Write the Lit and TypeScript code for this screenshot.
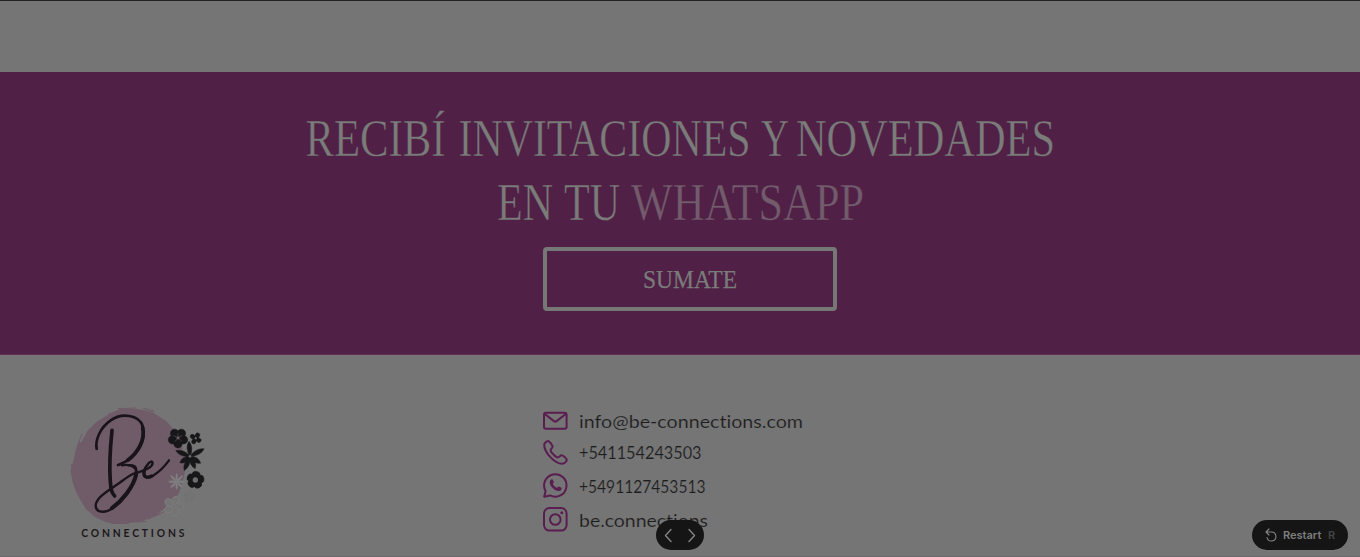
import { LitElement, html, svg, css } from "lit";
import { customElement } from "lit/decorators.js";

type Word = { t: string; x: number; w: number; soft?: boolean };

const line1: Word[] = [
  { t: "RECIBÍ", x: 305.5, w: 140 },
  { t: "INVITACIONES", x: 458.5, w: 292 },
  { t: "Y", x: 761, w: 28 },
  { t: "NOVEDADES", x: 796, w: 259 },
];
const line2: Word[] = [
  { t: "EN", x: 497, w: 56 },
  { t: "TU", x: 564, w: 56 },
  { t: "WHATSAPP", x: 631, w: 233, soft: true },
];

const icons = {
  mail: svg`<rect x="1" y="3.8" width="22.6" height="16" rx="2"/><path d="M1.8 5 11 12.100q1.300 1 2.600 0L22.800 5"/>`,
  phone: svg`<path d="M1.2 4.5C1.5 3 3.6 1.1 5 1c1.400 0 4.600 4.400 4.600 5.700 0 1.300-2 2.200-2 3.500 0 1.900 5.400 7.200 7.300 7.200 1.300 0 2.200-2.100 3.500-2.100 1.400 0 5.400 3 5.400 4.500 0 1.500-2.300 4-4.500 4C12.500 24 1 13 1.200 4.500Z"/>`,
  whatsapp: svg`<path d="M1.200 23.700 2.600 18A11.200 11.200 0 1 1 7.200 22.400Z"/><path class="solid" d="M8.300 6.400c.7-.5 1.300-.3 1.700.5l.8 2c.2.700-.8 1.400-.9 2 .4 1.400 2.600 3.500 4 3.800.7-.1 1.200-1.300 2-1.200l2.100 1c1.500.8.200 3-1.300 3.400-4 1-10.200-4.700-10-8.700 0-1.100.5-2.100 1.600-2.800Z"/>`,
  instagram: svg`<rect x="1" y="1" width="22.600" height="22.600" rx="5.500"/><circle cx="12.300" cy="12.500" r="5.300"/><circle class="solid" cx="18.800" cy="5.800" r="1.500"/>`,
};

const contacts = [
  { icon: icons.mail, text: "info@be-connections.com", w: 224, h: 30.5, y: 18.5 },
  { icon: icons.phone, text: "+541154243503", w: 122.5, h: 33.5, y: 19 },
  { icon: icons.whatsapp, text: "+5491127453513", w: 126.5, h: 34, y: 19.5 },
  { icon: icons.instagram, text: "be.connections", w: 129, h: 34, y: 19.5 },
];

const flower = (x: number, y: number, r: number, n: number, w: number, cls: string, rot = 0) => svg`
  <g class=${cls} transform="translate(${x} ${y}) rotate(${rot})">
    ${Array.from({ length: n }, (_, i) => svg`<ellipse cx="0" cy=${-r * 0.57} rx=${w} ry=${r * 0.43} transform="rotate(${(i * 360) / n})"/>`)}
  </g>`;

const star = (x: number, y: number, angles: number[], r: number[], w: number, cls: string) => svg`
  <g class=${cls} transform="translate(${x} ${y})">
    ${angles.map((a, i) => svg`<path d="M0 2Q${-w} ${-r[i] * 0.6} 0 ${-r[i]}Q${w} ${-r[i] * 0.6} 0 2Z" transform="rotate(${a})"/>`)}
  </g>`;

@customElement("brand-logo")
export class BrandLogo extends LitElement {
  static styles = css`
    :host { display: block; width: 160px; height: 160px; }
    svg { display: block; }
    .disc { fill: #705b68; }
    .brush { fill: none; stroke: #705b68; stroke-width: 3; stroke-linecap: round; }
    .ink { fill: none; stroke: #18141a; stroke-linecap: round; stroke-linejoin: round; }
    .dark { fill: #171719; stroke: #171719; stroke-width: 1.5; }
    .pale { fill: #7f7f7f; }
    .outline { fill: #757475; stroke: #838383; stroke-width: 1.5; }
    .faint { fill: #727272; stroke: #787878; stroke-width: 1.5; }
    .eye { fill: #6d6d6d; }
    .name { font: 700 31px "Lato", sans-serif; fill: #1b181b; }
  `;
  render() {
    return html`<svg width="160" height="160" viewBox="0 0 480 480">
      <path class="disc" d="M64 142 82 108 110 80 142 61 168 48 180 42 205 40 238 44 280 54 318 77 348 110 365 145 371 182 374 231 369 255 357 294 337 320 310 343 290 359 265 371 240 380 206 384 160 386 136 381 105 366 78 342 63 318 48 290 39 265 31 229 41 195 47 165 56 141Z"/>
      <path class="brush" d="M53 150 66 117M34 208 39 240M40 260 61 298M52 273 64 309M145 57 190 42M175 41 228 39M230 44 282 51M250 40 280 47M155 385 205 386M230 381 257 379M265 372 301 355M280 366 313 350M297 348 328 331M345 302 360 280"/>
      <g class="ink">
        <path stroke-width="8" d="M110 162C105 134 121 98 151 77C184 52 237 59 248 93C260 134 235 174 204 195C192 204 179 208 174 210"/>
        <path stroke-width="11" d="M248 98C256 137 232 174 203 196"/>
        <path stroke-width="11" d="M156 106C151 155 147 211 151 260C153 285 155 294 164 303"/>
        <path stroke-width="7" d="M186 211C215 205 236 220 229 244C217 279 190 318 158 340C134 356 107 353 107 332C108 307 145 287 178 264C193 253 210 239 226 234"/>
        <path stroke-width="12" d="M228 239C221 276 186 317 156 339"/>
        <path stroke-width="7" d="M205 211C221 208 234 215 226 235C237 230 279 222 278 203C275 191 255 213 251 231C249 252 268 251 281 241C299 229 314 214 327 196"/>
        <path stroke-width="10" d="M253 226C249 247 260 250 275 243"/>
      </g>
      ${flower(354, 129, 30, 5, 12.5, "dark", 36)}
      ${flower(407, 130, 18, 4, 6.5, "dark", 30)}
      ${star(390, 184, [-4, 62, 123, 157, 202, 237, 292], [45, 48, 38, 40, 46, 36, 46], 14, "dark")}
      ${flower(406, 255, 26, 5, 12, "dark", 8)}
      <circle class="eye" cx="406" cy="255" r="8"/>
      <circle class="eye" cx="390" cy="184" r="4"/>
      <circle class="eye" cx="407" cy="130" r="3"/>
      <path fill="none" stroke="#696469" stroke-width="1.5" d="M354 128V115M354 128 340 122M354 128 345 140M354 128 365 139M354 128 367 121"/>
      ${star(350, 260, [0, 45, 90, 135, 180, 225, 270, 315], [27, 27, 25, 25, 25, 27, 26, 28], 7, "pale")}
      ${flower(389, 304, 20, 5, 8, "faint", 10)}
      ${flower(340, 333, 30, 5, 11, "outline", 20)}
      <circle class="faint" cx="340" cy="333" r="5"/>
      <text class="name" x="64" y="426" textLength="309">CONNECTIONS</text>
    </svg>`;
  }
}

const SQUEEZE = 0.79;

@customElement("app-root")
export class AppRoot extends LitElement {
  static styles = css`
    :host { display: block; position: relative; height: 557px; overflow: hidden; background: #757575; font-family: "Lato", sans-serif; }
    svg { display: block; overflow: visible; }
    .top { box-sizing: border-box; height: 72px; border-top: 1px solid #232123; }
    .banner { box-sizing: border-box; height: 283px; padding-top: 28px; background: #502047; border-bottom: 1px solid #602f56; }
    .title { margin: 0; height: 147px; }
    .title text { font: 400 52px "Liberation Serif", serif; fill: #7a7c79; stroke: #502047; stroke-width: .4px; }
    .title .soft { fill: #725b6b; }
    .cta { box-sizing: border-box; display: flex; align-items: center; justify-content: center; width: 294px; height: 64px; margin-left: 543px; padding: 0; border: 4px solid #767876; border-radius: 4px; background: none; }
    .cta text { font: 400 24.5px "Liberation Serif", serif; fill: #7a7c79; stroke: #7a7c79; stroke-width: .25px; }
    .footer { display: flex; height: 202px; box-sizing: border-box; border-bottom: 1px solid #6d686b; }
    .logo { width: 483px; padding: 40px 0 0 60px; }
    .contacts { padding-top: 54px; }
    .row { display: flex; gap: 11px; }
    .icon { fill: none; stroke: #5a1d50; stroke-width: 2; stroke-linejoin: round; stroke-linecap: round; }
    .icon .solid { fill: #5a1d50; stroke: none; }
    .row text { font: 400 17.3px "Lato", sans-serif; font-variant-ligatures: none; fill: #1d1d1d; stroke: #757575; stroke-width: .2px; }
    .pill { position: absolute; top: 520px; height: 30px; border-radius: 15px; background: #151515; display: flex; align-items: center; box-sizing: border-box; }
    .nav { left: 656px; width: 48px; }
    .nav svg, .restart svg { fill: none; stroke: #858585; stroke-linecap: round; stroke-linejoin: round; }
    .restart { left: 1252px; width: 96px; padding-left: 12px; font: 600 11px "Inter", sans-serif; color: #7f7f7f; }
    .label { margin-left: 5px; width: 45px; }
    .key { color: #444; }
  `;

  private words(list: Word[], y: number) {
    return list.map(
      (w) => svg`<text class=${w.soft ? "soft" : ""} transform="translate(${w.x} ${y}) scale(${SQUEEZE} 1)" textLength=${w.w / SQUEEZE} lengthAdjust="spacingAndGlyphs">${w.t}</text>`
    );
  }

  render() {
    return html`
      <div class="top"></div>
      <section class="banner">
        <h1 class="title"><svg width="1360" height="147">${this.words(line1, 55.5)}${this.words(line2, 119.5)}</svg></h1>
        <button class="cta"><svg width="94" height="24"><text x="0" y="20.5" textLength="94" lengthAdjust="spacingAndGlyphs">SUMATE</text></svg></button>
      </section>
      <footer class="footer">
        <div class="logo"><brand-logo></brand-logo></div>
        <div class="contacts">
          ${contacts.map(
            (c) => html`<div class="row" style="height:${c.h}px">
              <svg class="icon" width="25" height="25" viewBox="0 0 25 25">${c.icon}</svg>
              <svg width=${c.w} height="25"><text x="0" y=${c.y} textLength=${c.w} lengthAdjust="spacingAndGlyphs">${c.text}</text></svg>
            </div>`
          )}
        </div>
      </footer>
      <nav class="pill nav">
        <svg width="48" height="30" stroke-width="1.4"><path d="M15 9.5 9.5 15.5 15 21.5M33 9.5l5.500 6-5.500 6"/></svg>
      </nav>
      <div class="pill restart">
        <svg width="14" height="16" viewBox="0 0 14 16" stroke-width="1.1"><path d="M5 2 2 5 5 8M2 5H7.500a4.500 4.500 0 1 1-4.500 5.500"/></svg>
        <span class="label">Restart</span><span class="key">R</span>
      </div>
    `;
  }
}
